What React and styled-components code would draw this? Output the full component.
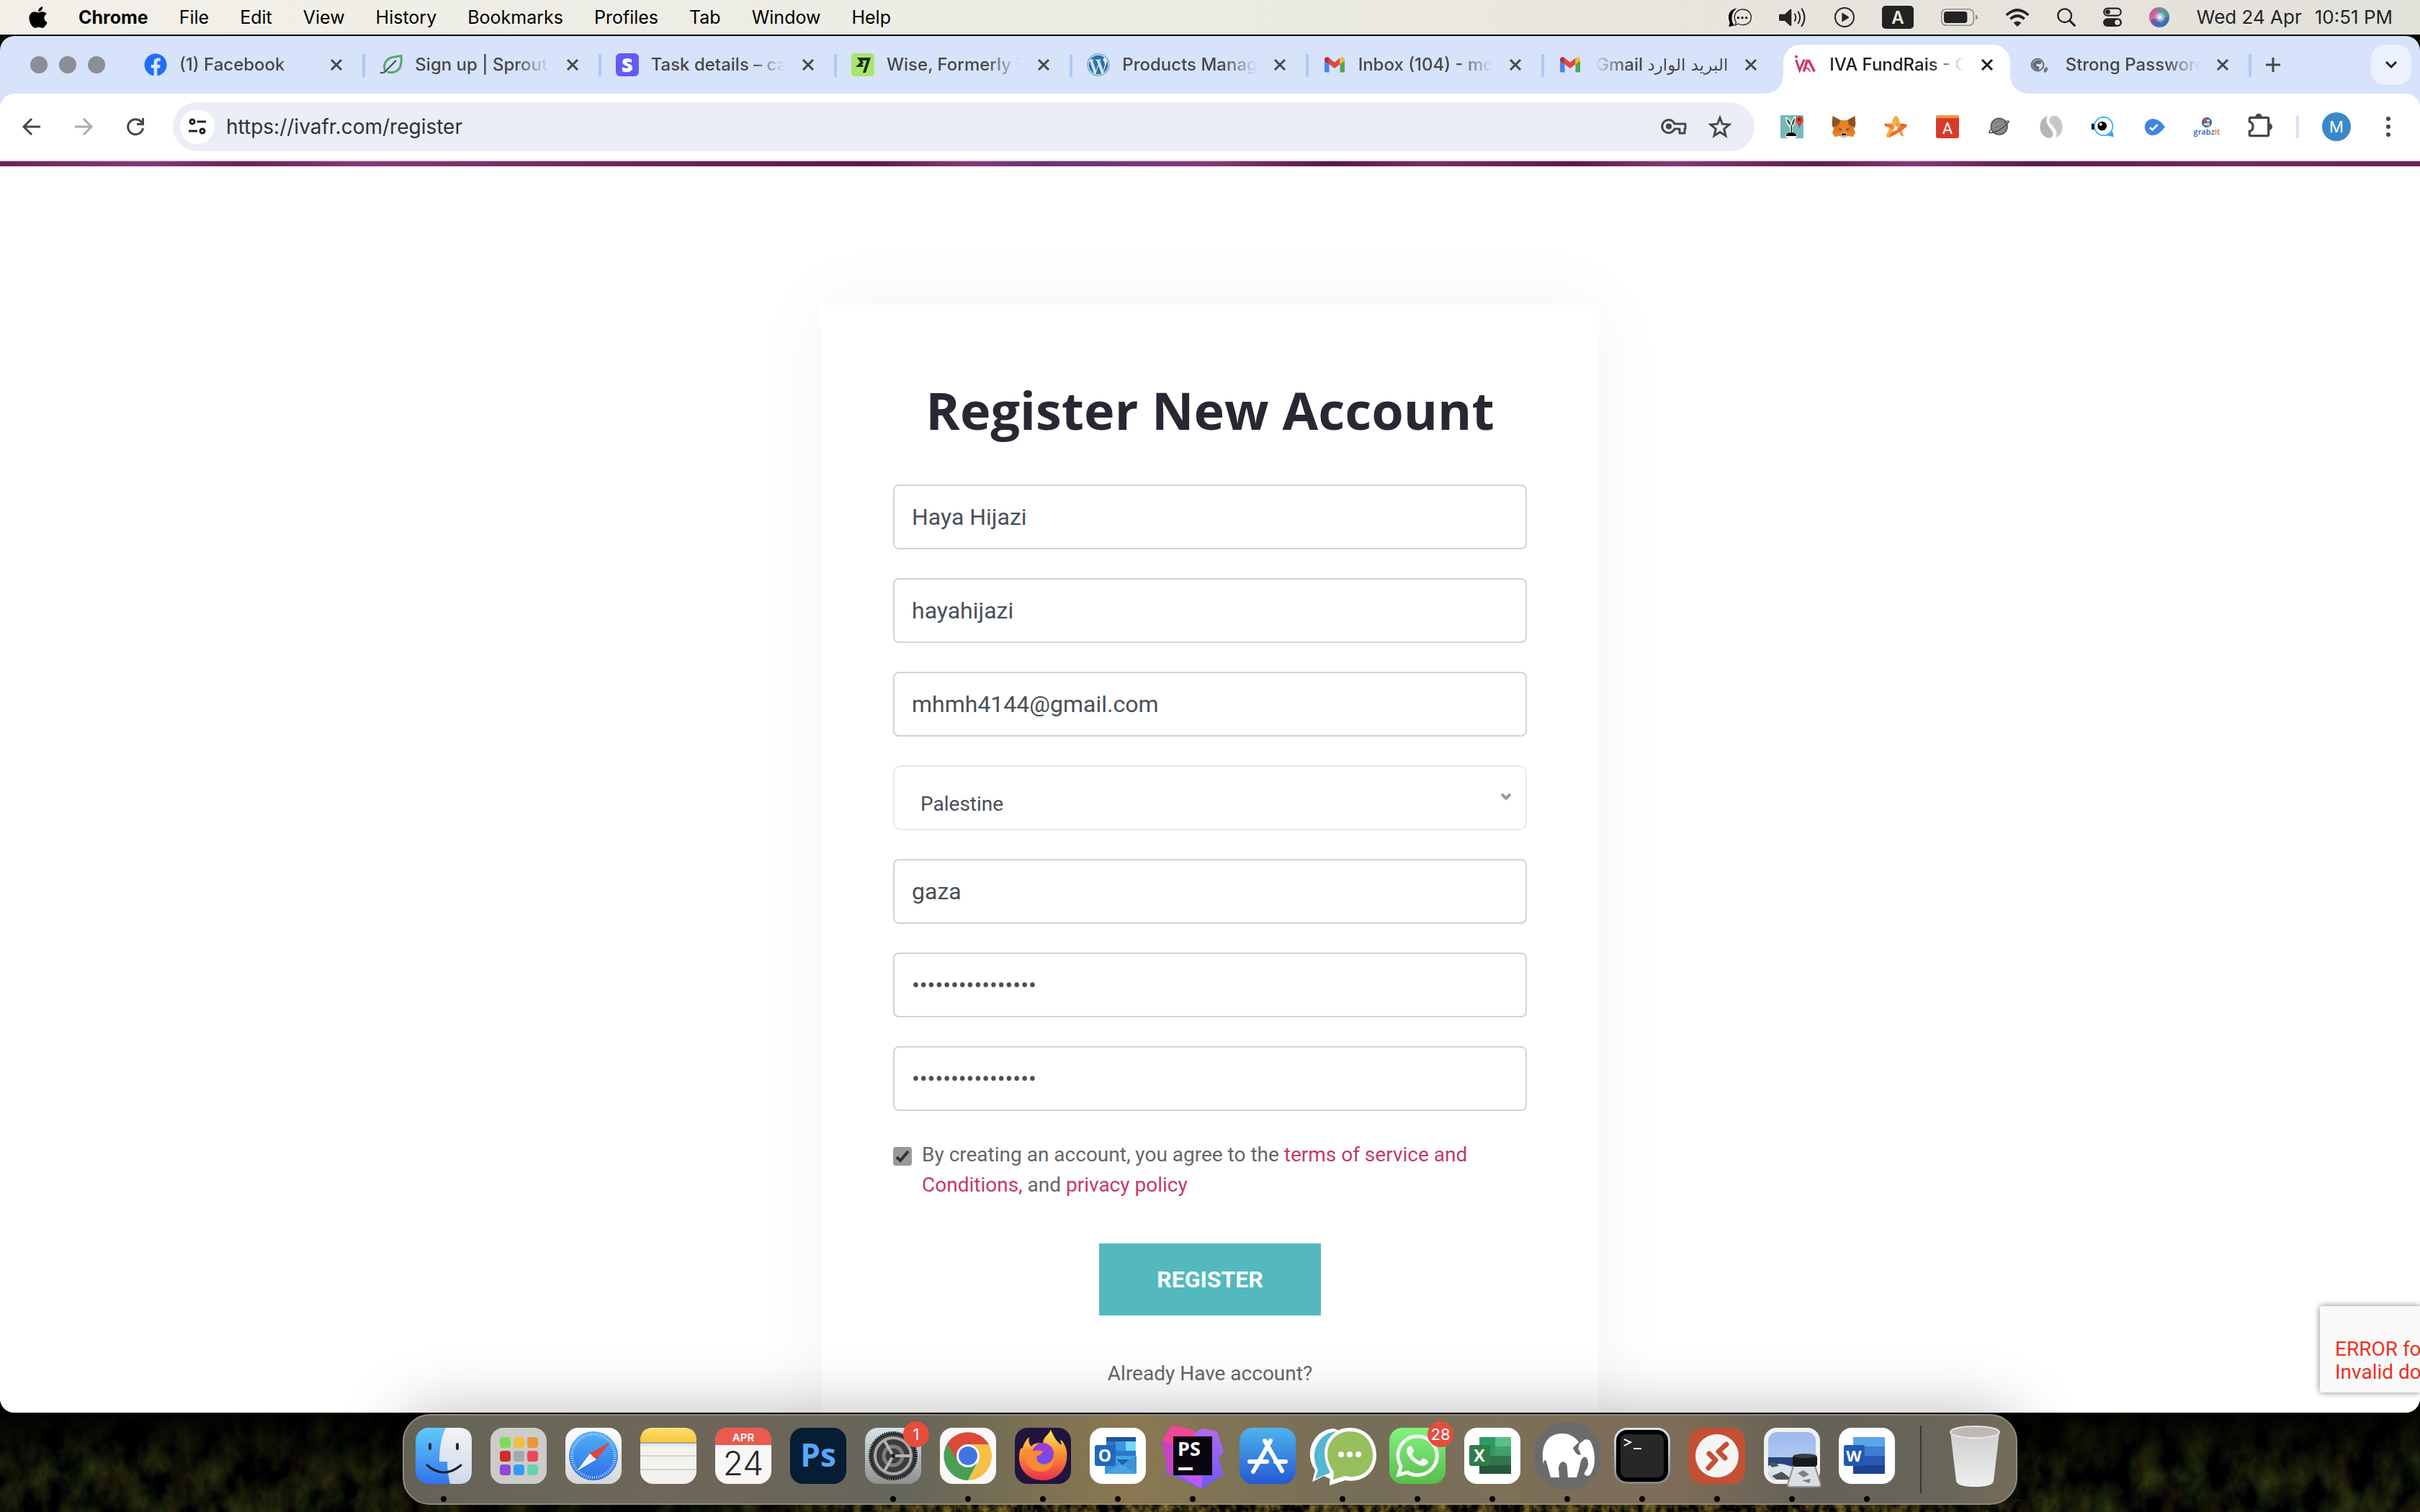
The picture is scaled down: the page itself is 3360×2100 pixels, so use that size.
import React, { useState } from "react";
import styled, { createGlobalStyle } from "styled-components";
import { FaApple, FaFacebook, FaWordpress, FaWhatsapp } from "react-icons/fa";

const GlobalStyle = createGlobalStyle`
  *, *::before, *::after {
    box-sizing: border-box;
  }

  body {
    margin: 0;
    background: #080a04;
    font-family: Inter, "Noto Sans", sans-serif;
  }

  button {
    font-family: inherit;
    border: none;
    padding: 0;
    background: none;
    color: inherit;
    cursor: pointer;
  }

  svg {
    display: block;
    flex: none;
  }
`;

const Desktop = styled.div`
  display: flex;
  flex-direction: column;
  height: 100vh;
  overflow: hidden;
  position: relative;
`;

const Wallpaper = styled.svg`
  position: absolute;
  left: 0;
  bottom: 0;
  width: 100%;
  height: 180px;
`;

/* ---------- macOS menu bar ---------- */

const MenuBar = styled.header`
  display: flex;
  align-items: center;
  justify-content: space-between;
  height: 48px;
  padding: 0 38px 0 40px;
  background: linear-gradient(90deg, #f2f0e8, #ebebe3 50%, #e9e5de 68%, #e2e1da);
  color: #000;
  flex: none;
`;

const MenuGroup = styled.nav`
  display: flex;
  align-items: center;
  gap: 43px;
`;

const AppleLogo = styled(FaApple)`
  width: 26px;
  height: 34px;
`;

const MenuItem = styled.button`
  font-size: 25px;
  line-height: 32px;
  font-weight: ${({ $bold }) => ($bold ? 700 : 400)};
`;

const StatusGroup = styled.div`
  display: flex;
  align-items: center;
  gap: 38px;
  color: #232323;
`;

const Clock = styled.div`
  display: flex;
  gap: 18px;
  font-size: 26px;
  line-height: 32px;
  white-space: nowrap;
`;

/* ---------- browser window ---------- */

const BrowserWindow = styled.div`
  display: flex;
  flex-direction: column;
  flex: 1;
  min-height: 0;
  margin-top: 2px;
  border-radius: 20px;
  background: #d7e2fb;
  box-shadow: 0 0 0 2px #000;
  overflow: hidden;
  position: relative;
`;

const TabStrip = styled.div`
  display: flex;
  align-items: center;
  height: 80px;
  flex: none;
`;

const WindowButtons = styled.div`
  display: flex;
  gap: 16px;
  width: 180px;
  padding-left: 42px;
  flex: none;
`;

const WindowDot = styled.button`
  width: 24px;
  height: 24px;
  border-radius: 50%;
  background: #8b8e97;
`;

const Tabs = styled.div`
  display: flex;
  flex: 1;
  min-width: 0;
  height: 100%;
`;

const TabBox = styled.div`
  display: flex;
  align-items: center;
  flex: 1 1 0;
  min-width: 0;
  padding: 0 20px;
  position: relative;
  isolation: isolate;
  color: ${({ $active }) => ($active ? "#1f1f1f" : "#474747")};
  border-right: 4px solid transparent;

  ${({ $active }) =>
    $active &&
    `
    &::before {
      content: "";
      position: absolute;
      z-index: -1;
      inset: 12px 4px 0 5px;
      border-radius: 24px 24px 0 0;
      background: #fff;
    }
    &::after {
      content: "";
      position: absolute;
      z-index: -1;
      height: 24px;
      inset: auto -20px 0 -19px;
      background:
        radial-gradient(circle at 0 0, transparent 23px, #fff 24px) left / 24px 24px no-repeat,
        radial-gradient(circle at 100% 0, transparent 23px, #fff 24px) right / 24px 24px no-repeat;
    }
  `}
`;

const TabTitle = styled.span`
  flex: 1;
  min-width: 0;
  margin: 0 16px 0 17px;
  font-size: 24px;
  line-height: 32px;
  font-weight: 500;
  white-space: nowrap;
  overflow: hidden;
  mask-image: linear-gradient(
    ${({ dir }) => (dir === "rtl" ? "270deg" : "90deg")},
    #000 calc(100% - 48px),
    transparent
  );
`;

const ArabicTitle = styled.span`
  font-family: "DejaVu Sans", sans-serif;
  font-size: 23px;
`;

const CloseButton = styled.button`
  display: grid;
  place-items: center;
  width: 32px;
  height: 32px;
`;

const Separator = styled.span`
  width: 4px;
  height: 32px;
  border-radius: 2px;
  background: ${({ $light }) => ($light ? "#d7e2fb" : "#aec8f8")};
  flex: none;
`;

const TabSeparator = styled(Separator)`
  position: absolute;
  right: -4px;
  top: 25px;
`;

const ToolbarDivider = styled(Separator)`
  margin: 0 16px;
`;

const StripActions = styled.div`
  display: flex;
  justify-content: space-between;
  align-items: center;
  width: 234px;
  padding: 0 12px 0 6px;
  flex: none;
`;

const StripButton = styled.button`
  display: grid;
  place-items: center;
  width: ${({ $filled }) => ($filled ? 56 : 48)}px;
  height: 56px;
  border-radius: 20px;
  background: ${({ $filled }) => ($filled ? "#ebf2fd" : "none")};
`;

const Toolbar = styled.div`
  display: flex;
  align-items: center;
  height: 94px;
  padding: 0 8px;
  border-radius: 20px 20px 0 0;
  border-bottom: 2px solid #e0e0e2;
  background: #fff;
  flex: none;
`;

const ToolButton = styled.button`
  display: grid;
  place-items: center;
  width: ${({ $narrow }) => ($narrow ? 64 : 72)}px;
  height: 64px;
  flex: none;
`;

const Omnibox = styled.div`
  display: flex;
  align-items: center;
  flex: 1;
  min-width: 0;
  height: 68px;
  margin: 0 16px;
  padding: 0 16px 0 10px;
  border-radius: 34px;
  background: #ebeef6;
`;

const SiteInfo = styled.button`
  display: grid;
  place-items: center;
  width: 48px;
  height: 48px;
  border-radius: 50%;
  background: #fff;
  flex: none;
`;

const UrlInput = styled.input`
  flex: 1;
  min-width: 0;
  padding: 0 16px;
  border: none;
  outline: none;
  background: none;
  color: #303133;
  font-family: inherit;
  font-size: 28px;
`;

const Avatar = styled.span`
  display: grid;
  place-items: center;
  width: 40px;
  height: 40px;
  border-radius: 50%;
  background: #3a88cb;
  color: #fff;
  font-size: 22px;
`;

/* ---------- web page ---------- */

const Page = styled.main`
  flex: 1;
  min-height: 0;
  overflow: hidden;
  background: #fff;
  font-family: Roboto, sans-serif;
`;

const HeroEdge = styled.div`
  height: 7px;
  margin-bottom: 192px;
  background: linear-gradient(
    90deg, #6b2260, #84397a 6%, #6c2160 10%, #84397a 15%, #702563 25%, #5d174f 36%, #84397a 40%,
    #6d3272 43%, #84397a 50%, #571748 55%, #7b2d68 59%, #5f174d 65%, #84397a 69%, #5d1c56 75%,
    #84397a 79%, #5a1a53 84%, #752863 92%, #6b2059
  );
`;

const Card = styled.form`
  display: flex;
  flex-direction: column;
  width: 1080px;
  max-width: 100%;
  margin: 0 auto;
  padding: 96px 100px 120px;
  background: #fff;
  box-shadow: 0 0 100px rgba(0, 0, 0, 0.05);
`;

const Title = styled.h1`
  margin: 0 0 54px;
  font-family: "Open Sans", sans-serif;
  font-size: 72px;
  font-weight: 700;
  line-height: 100px;
  text-align: center;
  color: #292733;
`;

const Fields = styled.div`
  display: flex;
  flex-direction: column;
  gap: 40px;
`;

const TextInput = styled.input`
  width: 100%;
  height: 90px;
  padding: 0 24px;
  border: 2px solid #ced4da;
  border-radius: 8px;
  background: #fff;
  color: #495057;
  font-family: inherit;
  font-size: 32px;
  outline: none;
`;

const SelectWrap = styled.div`
  position: relative;
`;

const Select = styled.select`
  display: block;
  width: 100%;
  height: 90px;
  padding: 16px 36px 0;
  border: 2px solid #e8e8e8;
  border-radius: 10px;
  appearance: none;
  background: #fff;
  color: #495057;
  font-family: inherit;
  font-size: 28px;
  outline: none;
`;

const SelectArrow = styled.svg`
  position: absolute;
  right: 22px;
  top: 37px;
  pointer-events: none;
`;

const Terms = styled.div`
  display: flex;
  gap: 14px;
  margin-top: 40px;
  color: #666;
  font-size: 28px;
  line-height: 42px;
`;

const CheckWrap = styled.span`
  display: grid;
  width: 26px;
  height: 26px;
  margin-top: 10px;
  flex: none;

  > * {
    grid-area: 1 / 1;
    pointer-events: none;
  }
`;

const Checkbox = styled.input`
  width: 26px;
  height: 26px;
  margin: 0;
  appearance: none;
  border-radius: 4px;
  background: #999;
  pointer-events: auto !important;
`;

const TermsLink = styled.a`
  color: #c23a6b;
  text-decoration: none;
`;

const RegisterButton = styled.button`
  align-self: center;
  width: 308px;
  height: 100px;
  margin-top: 60px;
  background: #53b9bf;
  color: #fff;
  font-size: 32px;
  font-weight: 700;
`;

const LoginHint = styled.p`
  margin: 60px 0 0;
  color: #666;
  font-size: 28px;
  line-height: 42px;
  text-align: center;
`;

const ErrorBadge = styled.div`
  position: absolute;
  right: 0;
  bottom: 28px;
  width: 139px;
  height: 120px;
  padding: 44px 0 0 21px;
  border-radius: 4px 0 0 4px;
  background: #f9f9f9;
  box-shadow: 0 0 10px #808080;
  color: #f03020;
  font-family: Roboto, sans-serif;
  font-size: 28px;
  line-height: 32px;
  white-space: nowrap;
  overflow: hidden;
`;

/* ---------- dock ---------- */

const DockArea = styled.footer`
  display: flex;
  justify-content: center;
  height: 138px;
  padding: 2px 0 10px;
  position: relative;
  flex: none;
`;

const DockBar = styled.div`
  display: flex;
  padding: 4px 5px 0 3px;
  border: 2px solid #8f8a7c;
  border-radius: 38px;
  background: linear-gradient(
    90deg, #646257, #6b6759 10%, #6f665a 18%, #65655a 31%, #7c7152 39%, #8b7852 45%, #7d7356 52%,
    #766d59 60%, #7c7058 68%, #7e6c58 79%, #646258 87%, #68655a 95%, #736c58
  );
  box-shadow: 0 0 90px rgba(0, 0, 0, 0.28);
`;

const DockItem = styled.button`
  display: flex;
  flex-direction: column;
  align-items: center;
  width: 104px;
  position: relative;
`;

const RunningDot = styled.span`
  width: 8px;
  height: 8px;
  margin-top: 4px;
  border-radius: 50%;
  background: #000;
`;

const DockBadge = styled.span`
  position: absolute;
  left: 66px;
  top: 4px;
  width: 36px;
  height: 36px;
  border-radius: 50%;
  background: #e74c3d;
  color: #fff;
  font-size: 22px;
  line-height: 36px;
  text-align: center;
`;

const DockDivider = styled.span`
  width: 2px;
  height: 94px;
  margin: 10px 22px 0;
  background: #3b372e;
`;

/* ---------- menu bar icons ---------- */

const MessagesStatus = () => (
  <svg width="33" height="28" viewBox="0 0 99 84">
    <path d="M38 5C8 6-5 36 8 62L4 82l24-6C8 55 15 18 38 5Z" fill="#000" />
    <path
      d="M62 9c20 0 35 13 35 33S82 74 62 74c-7 0-14-2-19-5l-12 6 3-14c-15-22-1-52 28-52Z"
      fill="none"
      stroke="#222"
      strokeWidth="4"
    />
    <circle cx="43" cy="44" r="5" />
    <circle cx="60" cy="44" r="5" />
    <circle cx="77" cy="44" r="5" />
  </svg>
);

const VolumeStatus = () => (
  <svg width="39" height="30" viewBox="0 0 117 90">
    <path d="M4 32h20L46 12q6-4 6 4v60q0 8-6 4L24 60H4q-4 0-4-6V38q0-6 4-6Z" fill="#232323" />
    <path
      d="M66 32q8 14 0 28M80 22q15 24 0 48M95 10q23 36 0 72"
      fill="none"
      stroke="#232323"
      strokeWidth="6"
      strokeLinecap="round"
    />
  </svg>
);

const PlayStatus = () => (
  <svg width="28" height="28" viewBox="0 0 84 84">
    <circle cx="42" cy="42" r="39" fill="none" stroke="#232323" strokeWidth="6" />
    <path d="M31 25v34q0 3 3 1l25-15q3-3 0-5L34 24q-3-2-3 1Z" fill="#232323" />
  </svg>
);

const KeyboardStatus = () => (
  <svg width="44" height="32" viewBox="0 0 44 32">
    <rect width="44" height="32" rx="5" fill="#232323" />
    <text x="22" y="25" textAnchor="middle" fontSize="24" fontWeight="600" fill="#ebebe3">
      A
    </text>
  </svg>
);

const BatteryStatus = () => (
  <svg width="51" height="24" viewBox="0 0 153 72">
    <rect x="2" y="2" width="134" height="68" rx="20" fill="none" stroke="#8f8f8a" strokeWidth="5" />
    <rect x="12" y="12" width="97" height="48" rx="11" fill="#232323" />
    <path d="M144 25q9 4 9 11t-9 11Z" fill="#8f8f8a" />
  </svg>
);

const WifiStatus = () => (
  <svg width="34" height="25" viewBox="0 0 102 75">
    <path d="M5 27q46-42 92 0M22 43q29-26 58 0" fill="none" stroke="#232323" strokeWidth="11" />
    <path d="M35 59q16-13 32 0L51 75Z" fill="#232323" />
  </svg>
);

const SearchStatus = () => (
  <svg width="26" height="26" viewBox="0 0 78 78">
    <circle cx="32" cy="32" r="28" fill="none" stroke="#232323" strokeWidth="7" />
    <path d="m53 53 20 20" stroke="#232323" strokeWidth="9" strokeLinecap="round" />
  </svg>
);

const ControlCenterStatus = () => (
  <svg width="26" height="28" viewBox="0 0 80 84">
    <rect x="4" y="4" width="72" height="31" rx="15.5" fill="none" stroke="#232323" strokeWidth="7" />
    <circle cx="20" cy="19" r="10" fill="#232323" />
    <rect y="46" width="80" height="36" rx="18" fill="#232323" />
    <circle cx="61" cy="64" r="11" fill="#e4e2db" />
  </svg>
);

const SiriStatus = () => (
  <svg width="28" height="28" viewBox="0 0 28 28">
    <defs>
      <linearGradient id="siriBase" x1="0" y1="0" x2="1" y2="1">
        <stop offset="0" stopColor="#b0478a" />
        <stop offset="0.35" stopColor="#d36aa8" />
        <stop offset="0.6" stopColor="#4a84c4" />
        <stop offset="1" stopColor="#2b4f9c" />
      </linearGradient>
      <radialGradient id="siriGlow">
        <stop offset="0" stopColor="#fff" />
        <stop offset="0.4" stopColor="#fff" stopOpacity="0.6" />
        <stop offset="1" stopColor="#fff" stopOpacity="0" />
      </radialGradient>
    </defs>
    <circle cx="14" cy="14" r="14" fill="url(#siriBase)" />
    <path d="M10 2q16-2 17 12-8 0-12-4T10 2Z" fill="#3da98c" opacity="0.85" />
    <path d="M2 17q10-2 14-1 0 8-5 10-8-2-9-9Z" fill="#5b3f9e" opacity="0.6" />
    <circle cx="15" cy="14" r="8" fill="url(#siriGlow)" />
  </svg>
);

/* ---------- tab icons ---------- */

const CloseIcon = () => (
  <svg width="18" height="18" viewBox="0 0 18 18" fill="none" stroke="currentColor" strokeWidth="3">
    <path d="m2 2 14 14M16 2 2 16" />
  </svg>
);

const LeafIcon = () => (
  <svg width="32" height="32" viewBox="0 0 32 32" fill="none">
    <path
      d="M9 26C4 19 7 8 18 5.500q6-1 12-2 1 8-1 14C27 25 19 28 11 26"
      stroke="#54a766"
      strokeWidth="3"
    />
    <path d="M1 27q6 1 9-4L23 10" stroke="#2c5436" strokeWidth="2" />
  </svg>
);

const SIcon = () => (
  <svg width="32" height="32" viewBox="0 0 32 32">
    <rect width="32" height="32" rx="6" fill="#635bf6" />
    <path
      d="M22 8.500q-4-1.700-7-1.500c-7 .3-7.500 8-1.500 10 4 1.500 4 1.800 3.800 2.800-.8 2-5.300.7-8.300-.8v6q6 2 10 .6c6-2.200 5-8.600.5-10.300-4-1.600-4.500-1.900-4-2.700.8-1.400 4-.6 6.500.4Z"
      fill="#fff"
    />
  </svg>
);

const WiseIcon = () => (
  <svg width="32" height="32" viewBox="0 0 32 32">
    <rect width="32" height="32" rx="5" fill="#a9e56f" />
    <path d="M8 6h19l-7 21h-4l5.500-17H15l2 3-3 3.500h3l-1 2.500H6l6.500-6.500Z" fill="#163300" />
  </svg>
);

const GmailIcon = () => (
  <svg width="32" height="32" viewBox="0 0 32 32">
    <path d="M2 10v14.500q0 2 2 2h4.500V14Z" fill="#4a86e8" />
    <path d="M30 10v14.500q0 2-2 2h-4.500V14Z" fill="#4fa758" />
    <path d="M8.500 6.500 16 12.500l7.500-6v8.800L16 21l-7.500-5.700Z" fill="#e0493c" />
    <path d="M2 9c0-4 4-4.500 6.500-2.500v8.800L2 10.500Z" fill="#bb2d25" />
    <path d="M30 9c0-4-4-4.500-6.500-2.500v8.800L30 10.500Z" fill="#f3bb38" />
  </svg>
);

const IvaIcon = () => (
  <svg width="32" height="32" viewBox="0 0 96 96" fill="none">
    <circle cx="9" cy="14" r="6" fill="#b83868" />
    <path d="m8 27 15 44 17-41h6" stroke="#c23a6c" strokeWidth="9" />
    <path d="M40 76 54 32h8l23 44" stroke="#cf3e72" strokeWidth="11" />
    <path d="M48 64q12-6 18 12" stroke="#cf3e72" strokeWidth="6" />
  </svg>
);

const GlobeIcon = () => (
  <svg width="32" height="32" viewBox="0 0 96 96">
    <circle cx="30" cy="48" r="25" fill="none" stroke="#676b73" strokeWidth="6" />
    <path d="M14 36q20-16 34 0l-6 10-14-2-5 8 15 5-4 14Q8 66 9 46Z" fill="#676b73" />
    <ellipse cx="64" cy="69" rx="7" ry="12" fill="#74777f" transform="rotate(25 64 69)" />
  </svg>
);

/* ---------- toolbar icons ---------- */

const ArrowIcon = ({ forward }) => (
  <svg
    width="28"
    height="28"
    viewBox="0 0 28 28"
    fill="none"
    stroke={forward ? "#ababab" : "#474747"}
    strokeWidth="3"
  >
    <path d={forward ? "M2 14h23M14 3l11 11-11 11" : "M26 14H3M14 3 3 14l11 11"} />
  </svg>
);

const ReloadIcon = () => (
  <svg width="28" height="28" viewBox="0 0 28 28" fill="none" stroke="#474747" strokeWidth="3">
    <path d="M23 8.500A10.500 10.500 0 1 0 24.500 16M24.500 2v8.500H16" />
  </svg>
);

const TuneIcon = () => (
  <svg width="26" height="24" viewBox="0 0 26 24" fill="none" stroke="#222" strokeWidth="3">
    <circle cx="6" cy="5" r="3" />
    <path d="M12.500 5H25M1 18h12" />
    <circle cx="20" cy="18" r="3" />
  </svg>
);

const KeyIcon = () => (
  <svg width="40" height="32" viewBox="0 0 40 32" fill="none" stroke="#474747" strokeWidth="3">
    <path d="M21 12h15v7h-1v6h-7v-6h-7a9 9 0 1 1 0-7Z" strokeLinejoin="round" />
    <circle cx="13" cy="15.500" r="2.500" fill="#474747" />
  </svg>
);

const StarIcon = () => (
  <svg width="32" height="32" viewBox="0 0 32 32" fill="none" stroke="#474747" strokeWidth="3">
    <path d="m16 3.500 3.400 8.700 9.600.8-7.300 6.200 2.300 9.300-8-5-8 5 2.300-9.300L3 13l9.600-.8Z" />
  </svg>
);

const PlantIcon = () => (
  <svg width="48" height="48" viewBox="0 0 144 144">
    <rect x="24" y="24" width="96" height="96" fill="#76b9bb" />
    <path d="M64 98V74Q44 60 46 32q20 6 23 24 2-18 18-28 4 32-13 46v24" fill="#fff" />
    <path d="M67 68Q50 56 50 38q17 8 17 30Zm5 0q-2-22 12-32 2 22-12 32Z" fill="#2d6144" />
    <path d="M70 66v32" stroke="#111" strokeWidth="4" />
    <ellipse cx="69" cy="108" rx="26" ry="13" fill="#fff" />
    <path d="M46 111q2-15 23-15t23 15Z" fill="#000" />
    <path d="M103 80q-2-12-10-22c-12-14-4-30 10-30s22 16 10 30q-8 10-10 22Z" fill="#d5443a" />
    <circle cx="103" cy="42" r="7" fill="#7c2620" />
  </svg>
);

const FoxIcon = () => (
  <svg width="48" height="48" viewBox="0 0 144 144">
    <path d="m26 28 34 17h24l34-17 3 32-7 20 6 18-11 17-20-5-8 6H63l-8-6-20 5-11-17 6-18-7-20Z" fill="#e8832a" />
    <path d="m26 28 32 18-8 19-24 10-3-15Zm92 0L86 46l8 19 24 10 3-15Z" fill="#8a5227" />
    <path d="m58 46-6 26 10 24-22-2-14 4 8-22 16-12 8-19Zm28 0 6 26-10 24 22-2 14 4-8-22-16-12-6-19Z" fill="#e0751c" />
    <path d="m48 79 14 2-2 6Zm48 0-14 2 2 6Z" fill="#303236" />
    <path d="m60 100 4-4h16l4 4v14H60Z" fill="#d6c4b4" />
    <path d="M64 100h16l2 8H62Z" fill="#1d1b1c" />
  </svg>
);

const RibbonStarIcon = () => (
  <svg width="48" height="48" viewBox="0 0 144 144">
    <path d="M24 59h76q18 0 20 8l-4 6H38q-8 0-14-14Z" fill="#e8552a" />
    <path d="M62 36q8-14 18-5 6 8 12 36l14 44q-12 4-17-10L70 46Z" fill="#f6a63d" />
    <path d="M62 36q8-8 14 6 0 12-8 32l-18 42q-14 6-18-8l22-46Z" fill="#f9b045" />
    <path d="M44 116q30-8 74-44l-4-8q-30 8-68 40Z" fill="#ee6f2e" />
    <path d="m30 60 10 13 18 12 5-12-9-14Z" fill="#ef7b34" />
    <path d="m80 84-7-22-12 30Z" fill="#fff" />
  </svg>
);

const LetterAIcon = () => (
  <svg width="48" height="48" viewBox="0 0 48 48">
    <rect x="8" y="8" width="32" height="32" rx="3" fill="#d63b2d" />
    <path d="M8 12v-1q0-3 3-3h26q3 0 3 3v1Z" fill="#e99a38" />
    <text x="24" y="34" textAnchor="middle" fontSize="22" fill="#fff" fontFamily="Roboto, sans-serif">
      A
    </text>
  </svg>
);

const PlanetIcon = () => (
  <svg width="48" height="48" viewBox="0 0 144 144" fill="none">
    <circle cx="71" cy="71" r="34" fill="#8b8b8b" stroke="#555" strokeWidth="5" />
    <path d="M48 62q26-16 38-14M50 78q26-6 44-22" stroke="#707070" strokeWidth="3" />
    <path d="M36 84q-12 14-2 14 26-2 60-28 24-22 14-22-6 0-14 6" stroke="#4d4d4d" strokeWidth="5" />
  </svg>
);

const SwirlIcon = () => (
  <svg width="48" height="48" viewBox="0 0 144 144">
    <path d="M57 27c-32 10-42 52-20 78 14 17 34 18 40 6 10-20-20-38-24-56-2-10-2-18 4-28Z" fill="#b5b5b5" />
    <path d="M66 36c10-16 34-10 44 6 18 30 8 66-20 76 14-26-8-44-20-58-6-8-8-16-4-24Z" fill="#c8c8c8" />
  </svg>
);

const EyeIcon = () => (
  <svg width="48" height="48" viewBox="0 0 144 144">
    <rect x="24" y="59" width="14" height="25" rx="3" fill="#000" />
    <circle cx="74" cy="70" r="38" fill="#fff" stroke="#38a7ea" strokeWidth="5" />
    <path d="M84 108q16-2 26-20l7 27Z" fill="#38a7ea" />
    <circle cx="68" cy="69" r="19" fill="#000" />
    <circle cx="62" cy="62" r="6" fill="#fff" />
  </svg>
);

const VerifiedIcon = () => (
  <svg width="48" height="48" viewBox="0 0 144 144">
    <path d="M114 73Q88 108 64 108a34 34 0 0 1 0-69q26 0 50 34Z" fill="#3f86e5" />
    <path d="m51 75 10 10 22-22" fill="none" stroke="#fff" strokeWidth="8" />
  </svg>
);

const GrabzIcon = () => (
  <svg width="48" height="48" viewBox="0 0 48 48">
    <circle cx="24" cy="18" r="7" fill="#2968ab" />
    <rect x="20" y="13" width="4" height="5" fill="#d85131" />
    <rect x="24" y="18" width="4" height="5" fill="#f0c64b" />
    <path d="M24 14h4v3h-4Zm-4 5h4v3h-4Z" fill="#cfdcec" />
    <text x="24" y="35" textAnchor="middle" fontSize="11" fontWeight="600" fill="#2d68ad" fontFamily="Open Sans, sans-serif">
      grabz<tspan fill="#e8663c">it</tspan>
    </text>
  </svg>
);

const PuzzleIcon = () => (
  <svg width="48" height="48" viewBox="0 0 144 144">
    <path
      d="M40 34h68q5 0 5 5v66q0 5-5 5H40q-6 0-6-5V91q14-4 14-20T34 51V39q0-5 6-5Z"
      fill="none"
      stroke="#474747"
      strokeWidth="10"
    />
    <path d="M58 31a14 14 0 0 1 28 0Zm56 26a15 15 0 0 1 0 30Z" fill="#474747" />
  </svg>
);

const MoreIcon = () => (
  <svg width="8" height="30" viewBox="0 0 8 30" fill="#474747">
    <circle cx="4" cy="4" r="3" />
    <circle cx="4" cy="15" r="3" />
    <circle cx="4" cy="26" r="3" />
  </svg>
);

/* ---------- dock icons, drawn on a 104 x 104 grid ---------- */

const Tile = ({ fill }) => <rect x="13" y="13" width="78" height="78" rx="18" fill={fill} />;

const Gradient = ({ id, stops }) => (
  <linearGradient id={id} x1="0" y1="0" x2="0" y2="1">
    {stops.map((color, i) => (
      <stop key={color} offset={i / (stops.length - 1)} stopColor={color} />
    ))}
  </linearGradient>
);

const finder = (
  <>
    <Gradient id="finderBlue" stops={["#5ecbfa", "#3373ee"]} />
    <Gradient id="finderGrey" stops={["#f1f2f5", "#d0dae8"]} />
    <Tile fill="url(#finderBlue)" />
    <path d="M55 13h18q18 0 18 18v42q0 18-18 18H61q-4-16-4-31H46q0-30 9-47Z" fill="url(#finderGrey)" />
    <path d="M33 36v6M71 36v6" stroke="#1d2a3c" strokeWidth="4" strokeLinecap="round" />
    <path d="M29 65q23 20 47 0" fill="none" stroke="#14202e" strokeWidth="3" strokeLinecap="round" />
  </>
);

const launchpadColors = [
  "#7bdc55", "#f5bf3e", "#eb9636", "#cd3026", "#a3a8ab", "#ee4858", "#9148d2", "#319cf6", "#69d0a8",
];

const launchpad = (
  <>
    <Tile fill="#ccccca" />
    {launchpadColors.map((color, i) => (
      <rect key={color} x={26 + (i % 3) * 19} y={26 + Math.floor(i / 3) * 19} width="15" height="15" rx="4" fill={color} />
    ))}
  </>
);

const safari = (
  <>
    <Gradient id="safariTile" stops={["#ffffff", "#d6d6d8"]} />
    <Gradient id="safariDial" stops={["#4fb0f4", "#2c6fe6"]} />
    <Tile fill="url(#safariTile)" />
    <circle cx="52" cy="52" r="34" fill="url(#safariDial)" />
    <circle cx="52" cy="52" r="30" fill="none" stroke="#b9dbf9" strokeWidth="4" strokeDasharray="1 2" />
    <path d="m76 32-29 17 9 8Z" fill="#e2443b" />
    <path d="M29 73 47 49l9 8Z" fill="#f2f2f2" />
  </>
);

const notes = (
  <>
    <Gradient id="notesTop" stops={["#fbdf6d", "#f8c63f"]} />
    <Tile fill="#f4f2ef" />
    <path d="M13 33V31q0-18 18-18h42q18 0 18 18v2Z" fill="url(#notesTop)" />
    <path d="M13 34h78" stroke="#a4a19c" strokeWidth="2" />
    <path d="M14 37h76" stroke="#c4c2be" strokeWidth="2" strokeDasharray="1 2" />
    <path d="M13 52h78M13 71h78" stroke="#d3d2d0" strokeWidth="2" />
  </>
);

const calendar = (
  <>
    <Tile fill="#f8f7f6" />
    <path d="M13 37v-6q0-18 18-18h42q18 0 18 18v6Z" fill="#ea5a4e" />
    <text x="52" y="32" textAnchor="middle" fontSize="15" fontWeight="600" fill="#fff">APR</text>
    <text x="52" y="79" textAnchor="middle" fontSize="46" fontWeight="300" fill="#2a2a2a">24</text>
  </>
);

const photoshop = (
  <>
    <Tile fill="#071d33" />
    <text x="52" y="67" textAnchor="middle" fontSize="44" fontWeight="700" fill="#55a8fb" fontFamily="Open Sans, sans-serif">
      Ps
    </text>
  </>
);

const settings = (
  <>
    <Gradient id="settingsTile" stops={["#d5e3e8", "#8f8f90"]} />
    <Tile fill="url(#settingsTile)" />
    <circle cx="52" cy="52" r="32" fill="#3c3c3c" />
    <circle cx="52" cy="52" r="32" fill="none" stroke="#1d1d1d" strokeWidth="4" strokeDasharray="2 1" />
    <circle cx="52" cy="52" r="25" fill="none" stroke="#a9a9a9" strokeWidth="4" />
    <circle cx="52" cy="52" r="13" fill="none" stroke="#7d7d7d" strokeWidth="5" />
    <path d="M52 52h24M52 52 40 31M52 52 40 73" stroke="#b5b5b5" strokeWidth="4" />
    <circle cx="52" cy="52" r="3" fill="#222" />
  </>
);

const chrome = (
  <>
    <Tile fill="#f8f8f8" />
    <path d="M52 52h-1L23 35a34 34 0 0 0 29 51l14-26Z" fill="#4a9f55" />
    <path d="M52 36h29a34 34 0 0 1-29 50l15-26Z" fill="#f4c045" />
    <path d="M23 35a34 34 0 0 1 58 1H52l-14 24Z" fill="#d94a3d" />
    <circle cx="52" cy="52" r="16" fill="#fff" />
    <circle cx="52" cy="52" r="13" fill="#3e77e4" />
  </>
);

const firefox = (
  <>
    <Gradient id="foxFlame" stops={["#fde84d", "#f98b35", "#e8304f"]} />
    <Gradient id="foxBall" stops={["#a33ad8", "#6a4fe8"]} />
    <Tile fill="#21143d" />
    <path
      d="M63 16c-4 8-13 12-10 19-10-2-15 1-17 4-4-4-4-9-3-13-5 4-8 10-9 15l-3 1c-8 24 8 44 31 44 22 0 36-18 33-40-1-8-5-14-9-17l2 8c-9-6-11-13-15-21Z"
      fill="url(#foxFlame)"
    />
    <circle cx="52" cy="49" r="15" fill="url(#foxBall)" />
    <path d="M25 43q8-2 13 2 7-1 14 0-2 6-8 7-3 10 10 12 8 0 14-8-2 18-20 18Q26 72 25 43Z" fill="#f98a38" />
  </>
);

const outlook = (
  <>
    <Tile fill="#fff" />
    <path d="M36 26h41v40H36Z" fill="#2a78c8" />
    <path d="M36 26h41v6H36Z" fill="#1f559c" />
    <path d="M63 32h14v13H63Z" fill="#74d6fb" />
    <path d="M49 32h14v13H49Z" fill="#3f96e0" />
    <path d="M34 52h44v23q0 2-2 2H36q-2 0-2-2Z" fill="#46a5e4" />
    <path d="M34 52v25l22-14 22 14V52L56 64Z" fill="#3b93d8" />
    <path d="m50 57 8 8 10-8Z" fill="#235fa8" />
    <rect x="20" y="37" width="29" height="29" rx="3" fill="#1f69bd" />
    <text x="34" y="60" textAnchor="middle" fontSize="23" fontWeight="700" fill="#fff" fontFamily="Open Sans, sans-serif">O</text>
  </>
);

const phpstorm = (
  <>
    <Gradient id="stormBlue" stops={["#b36bf0", "#6a5af6"]} />
    <path d="m54 20 12-6 20 4 9 28-7 10 7 22-31 20-29-14-20-8 1-48Z" fill="url(#stormBlue)" />
    <path d="m23 9 31 7 2 18-22 20-25-22Z" fill="#ee4896" />
    <path d="m9 30 20 8 2 40-13-2Z" fill="#c544c4" />
    <path d="m33 79 31 19 2-21Z" fill="#b95af5" />
    <rect x="25" y="25" width="54" height="54" fill="#0b050f" />
    <text x="31" y="52" fontSize="27" fontWeight="700" fill="#fff" fontFamily="Open Sans, sans-serif">PS</text>
    <path d="M32 70h20" stroke="#fff" strokeWidth="4" />
  </>
);

const appStore = (
  <>
    <Gradient id="storeTile" stops={["#4fb3ec", "#2458d4"]} />
    <Tile fill="url(#storeTile)" />
    <path
      d="m56 31-21 38M48 31l24 42M27 60h24M63 60h14M33 72l-1 2"
      stroke="#fff"
      strokeWidth="6"
      strokeLinecap="round"
    />
  </>
);

const chatBubbles = (
  <>
    <path d="M40 14C10 16-2 50 14 72l-4 16 16-8 18 8 10-68Z" fill="#fff" />
    <path d="M42 18C16 22 6 50 18 72l-4 12 20-8Z" fill="#53b6d2" />
    <path d="M62 13c24 0 37 18 37 38 0 24-19 39-43 35l-22 7 1-18C16 43 34 13 62 13Z" fill="#fff" />
    <path d="M62 18c21 0 32 16 32 33 0 22-18 34-39 29l-16 5 1-11C20 48 36 18 62 18Z" fill="#97bf5d" />
    <g fill="#fff">
      <circle cx="50" cy="50" r="4" />
      <circle cx="62" cy="50" r="4" />
      <circle cx="74" cy="50" r="4" />
    </g>
  </>
);

const whatsapp = (
  <>
    <Gradient id="waTile" stops={["#83f37f", "#58bd4b"]} />
    <Tile fill="url(#waTile)" />
    <FaWhatsapp x="18" y="18" size={68} color="#f4f4f4" />
  </>
);

const excel = (
  <>
    <Tile fill="#fff" />
    <path d="M34 26h44v51H34Z" fill="#2f9a63" />
    <path d="M56 26h22v13H56Z" fill="#5bc087" />
    <path d="M56 39h22v13H56Z" fill="#459f68" />
    <path d="M34 52h44v13H34Z" fill="#33744a" />
    <path d="M34 65h44v12H34Z" fill="#27573a" />
    <rect x="20" y="37" width="29" height="29" rx="3" fill="#2f7d47" />
    <text x="34" y="60" textAnchor="middle" fontSize="23" fontWeight="700" fill="#fff" fontFamily="Open Sans, sans-serif">X</text>
  </>
);

const elephant = (
  <>
    <circle cx="52" cy="52" r="47" fill="#6b6b6b" />
    <path
      d="M46 21c10 0 18 6 22 12l-8 8q4 10 10 10 2-2-3-9l2-7 8-6 6 1c9 14 8 34 4 42q-3 10-10 7-3-2 1-7c6-8 2-21-3-18-5 2-5 12-7 18l-3 10H53l-1-12c0-14-12-12-12 0l1 12H29L23 60Q20 54 19 64C14 36 26 20 46 21Z"
      fill="#fff"
    />
  </>
);

const terminal = (
  <>
    <Gradient id="terminalRim" stops={["#d5eaf2", "#84838a"]} />
    <Tile fill="url(#terminalRim)" />
    <rect x="16" y="16" width="72" height="72" rx="15" fill="#000" />
    <rect x="22" y="22" width="60" height="60" rx="8" fill="#272727" />
    <path d="m27 29 9 4-9 5M40 42h11" fill="none" stroke="#fff" strokeWidth="2" />
  </>
);

const remoteDesktop = (
  <>
    <Tile fill="#c45033" />
    <circle cx="52" cy="52" r="30" fill="#f5f5f5" />
    <path
      d="m41 49 9 9-10 11M65 36 54 46l9 9"
      fill="none"
      stroke="#c45033"
      strokeWidth="7"
      strokeLinejoin="round"
      strokeLinecap="round"
    />
  </>
);

const preview = (
  <>
    <Gradient id="previewSky" stops={["#9db9f0", "#bfd2ee"]} />
    <Tile fill="#f2f1ef" />
    <rect x="19" y="19" width="66" height="66" rx="12" fill="url(#previewSky)" />
    <path d="M19 54h66v17q0 14-14 14H31q-12 0-12-12Z" fill="#26457c" />
    <path d="M19 66q14-6 30 0l20 6v13H31q-12 0-12-12Z" fill="#d8e4ec" />
    <path d="M20 62q8-3 14 4l-10 2ZM24 80l14-6 12 9v2H31Z" fill="#4f5257" />
    <path d="M54 66h30l8 26q0 3-4 3H50q-4 0-4-3Z" fill="#dcdfe2" stroke="#8d9196" strokeWidth="2" />
    <path d="m60 76 8-4 8 6-8 4ZM66 86l12-2-2 6Z" fill="#77828f" />
    <rect x="53" y="51" width="34" height="16" rx="4" fill="#17181a" />
    <ellipse cx="70" cy="52" rx="16" ry="3" fill="#3c3d40" />
  </>
);

const word = (
  <>
    <Tile fill="#fff" />
    <path d="M33 26h44v13H33Z" fill="#5aa5e8" />
    <path d="M33 39h44v13H33Z" fill="#3f7dd0" />
    <path d="M33 52h44v13H33Z" fill="#2759b5" />
    <path d="M33 65h44v12H33Z" fill="#1e4290" />
    <rect x="20" y="37" width="29" height="29" rx="3" fill="#2258b4" />
    <text x="34" y="60" textAnchor="middle" fontSize="22" fontWeight="700" fill="#fff" fontFamily="Open Sans, sans-serif">W</text>
  </>
);

const trash = (
  <>
    <Gradient id="trashBody" stops={["#d0cfce", "#eeeeee"]} />
    <path d="M18 19 26 87q2 8 26 8t26-8l8-68Z" fill="url(#trashBody)" />
    <ellipse cx="52" cy="19" rx="34" ry="8" fill="#bcbab7" stroke="#e6e5e3" strokeWidth="2" />
  </>
);

const dockApps = [
  { name: "Finder", icon: finder, running: true },
  { name: "Launchpad", icon: launchpad },
  { name: "Safari", icon: safari },
  { name: "Notes", icon: notes },
  { name: "Calendar", icon: calendar },
  { name: "Photoshop", icon: photoshop },
  { name: "System Settings", icon: settings, running: true, badge: "1" },
  { name: "Google Chrome", icon: chrome, running: true },
  { name: "Firefox", icon: firefox, running: true },
  { name: "Outlook", icon: outlook, running: true },
  { name: "PhpStorm", icon: phpstorm, running: true },
  { name: "App Store", icon: appStore },
  { name: "Chat", icon: chatBubbles, running: true },
  { name: "WhatsApp", icon: whatsapp, running: true, badge: "28" },
  { name: "Excel", icon: excel, running: true },
  { name: "Postgres", icon: elephant, running: true },
  { name: "Terminal", icon: terminal, running: true },
  { name: "Remote Desktop", icon: remoteDesktop, running: true },
  { name: "Preview", icon: preview, running: true },
  { name: "Word", icon: word, running: true },
];

const menuItems = ["File", "Edit", "View", "History", "Bookmarks", "Profiles", "Tab", "Window", "Help"];

const tabs = [
  { icon: <FaFacebook size={32} color="#1f6ff2" />, title: "(1) Facebook", separator: true },
  { icon: <LeafIcon />, title: "Sign up | Sprout", separator: true },
  { icon: <SIcon />, title: "Task details – car", separator: true },
  { icon: <WiseIcon />, title: "Wise, Formerly Tr", separator: true },
  { icon: <FaWordpress size={32} color="#2b76a3" />, title: "Products Manage", separator: true },
  { icon: <GmailIcon />, title: "Inbox (104) - mo", separator: true },
  {
    icon: <GmailIcon />,
    title: (
      <>
        <ArabicTitle>البريد الوارد</ArabicTitle> Gmail
      </>
    ),
    dir: "rtl",
  },
  { icon: <IvaIcon />, title: "IVA FundRais - C", active: true },
  { icon: <GlobeIcon />, title: "Strong Password", separator: true },
];

const extensions = [
  { name: "Plant", icon: <PlantIcon /> },
  { name: "MetaMask", icon: <FoxIcon /> },
  { name: "Star", icon: <RibbonStarIcon /> },
  { name: "Letter", icon: <LetterAIcon /> },
  { name: "Planet", icon: <PlanetIcon /> },
  { name: "Swirl", icon: <SwirlIcon /> },
  { name: "Eye", icon: <EyeIcon /> },
  { name: "Verified", icon: <VerifiedIcon /> },
  { name: "GrabzIt", icon: <GrabzIcon /> },
  { name: "Extensions", icon: <PuzzleIcon /> },
];

function RegisterForm() {
  const [form, setForm] = useState({
    name: "Haya Hijazi",
    username: "hayahijazi",
    email: "mhmh4144@gmail.com",
    country: "Palestine",
    city: "gaza",
    password: "hayahijazi123456",
    confirm: "hayahijazi123456",
  });
  const [agreed, setAgreed] = useState(true);

  const handleChange = (e) => {
    setForm({ ...form, [e.target.name]: e.target.value });
  };

  return (
    <Card onSubmit={(e) => e.preventDefault()}>
      <Title>Register New Account</Title>
      <Fields>
        <TextInput name="name" aria-label="Full name" value={form.name} onChange={handleChange} />
        <TextInput name="username" aria-label="Username" value={form.username} onChange={handleChange} />
        <TextInput name="email" aria-label="Email" value={form.email} onChange={handleChange} />
        <SelectWrap>
          <Select name="country" aria-label="Country" value={form.country} onChange={handleChange}>
            <option>Palestine</option>
          </Select>
          <SelectArrow width="14" height="14" viewBox="0 0 14 14" fill="none" stroke="#999" strokeWidth="4">
            <path d="m1 3 6 6 6-6" />
          </SelectArrow>
        </SelectWrap>
        <TextInput name="city" aria-label="City" value={form.city} onChange={handleChange} />
        <TextInput type="password" name="password" aria-label="Password" value={form.password} onChange={handleChange} />
        <TextInput type="password" name="confirm" aria-label="Confirm password" value={form.confirm} onChange={handleChange} />
      </Fields>
      <Terms>
        <CheckWrap>
          <Checkbox id="agree" type="checkbox" checked={agreed} onChange={(e) => setAgreed(e.target.checked)} />
          {agreed && (
            <svg width="26" height="26" viewBox="0 0 26 26" fill="none" stroke="#333" strokeWidth="4">
              <path d="m5 14 5 5L21 6" />
            </svg>
          )}
        </CheckWrap>
        <label htmlFor="agree">
          By creating an account, you agree to the{" "}
          <TermsLink href="#terms">terms of service and Conditions,</TermsLink> and{" "}
          <TermsLink href="#privacy">privacy policy</TermsLink>
        </label>
      </Terms>
      <RegisterButton type="submit">REGISTER</RegisterButton>
      <LoginHint>Already Have account?</LoginHint>
    </Card>
  );
}

function Background() {
  return (
    <Wallpaper aria-hidden="true">
      <defs>
        <filter id="foliage" x="0" y="0" width="100%" height="100%" colorInterpolationFilters="sRGB">
          <feTurbulence type="fractalNoise" baseFrequency="0.03 0.02" numOctaves="5" seed="8" />
          <feColorMatrix values="0.36 0.1 0 0 -0.16  0.42 0 0 0 -0.13  0.1 0 0 0 -0.02  0 0 0 0 1" />
        </filter>
        <filter id="brush" x="0" y="0" width="100%" height="100%" colorInterpolationFilters="sRGB">
          <feTurbulence type="fractalNoise" baseFrequency="0.08 0.06" numOctaves="4" seed="3" />
          <feColorMatrix values="1.3 0 0 0 -0.4  1.1 0 0 0 -0.34  0.4 0 0 0 -0.12  0 0 0 0 1" />
        </filter>
        <linearGradient id="shade" x1="0" y1="0" x2="0" y2="1">
          <stop offset="0.2" stopColor="#000" stopOpacity="0.95" />
          <stop offset="0.7" stopColor="#000" stopOpacity="0.1" />
        </linearGradient>
        <linearGradient id="brushFade">
          <stop offset="0.3" stopColor="#000" />
          <stop offset="0.4" stopColor="#fff" />
          <stop offset="0.75" stopColor="#fff" />
          <stop offset="0.86" stopColor="#000" />
        </linearGradient>
        <mask id="brushMask">
          <rect width="100%" height="100%" fill="url(#brushFade)" />
        </mask>
      </defs>
      <rect width="100%" height="100%" filter="url(#foliage)" />
      <g mask="url(#brushMask)">
        <rect y="90%" width="100%" height="10%" filter="url(#brush)" />
      </g>
      <rect width="100%" height="100%" fill="url(#shade)" />
    </Wallpaper>
  );
}

function App() {
  return (
    <>
      <GlobalStyle />
      <Desktop>
        <Background />
        <MenuBar>
          <MenuGroup>
            <AppleLogo aria-label="Apple menu" />
            <MenuItem $bold>Chrome</MenuItem>
            {menuItems.map((item) => (
              <MenuItem key={item}>{item}</MenuItem>
            ))}
          </MenuGroup>
          <StatusGroup>
            <MessagesStatus />
            <VolumeStatus />
            <PlayStatus />
            <KeyboardStatus />
            <BatteryStatus />
            <WifiStatus />
            <SearchStatus />
            <ControlCenterStatus />
            <SiriStatus />
            <Clock>
              <span>Wed 24 Apr</span>
              <span>10:51 PM</span>
            </Clock>
          </StatusGroup>
        </MenuBar>

        <BrowserWindow>
          <TabStrip>
            <WindowButtons>
              <WindowDot aria-label="Close window" />
              <WindowDot aria-label="Minimise window" />
              <WindowDot aria-label="Zoom window" />
            </WindowButtons>
            <Tabs>
              {tabs.map((tab, i) => (
                <TabBox key={i} $active={tab.active}>
                  {tab.icon}
                  <TabTitle dir={tab.dir}>{tab.title}</TabTitle>
                  <CloseButton aria-label="Close tab">
                    <CloseIcon />
                  </CloseButton>
                  {tab.separator && <TabSeparator />}
                </TabBox>
              ))}
            </Tabs>
            <StripActions>
              <StripButton aria-label="New tab">
                <svg width="20" height="20" viewBox="0 0 20 20" stroke="#474747" strokeWidth="3">
                  <path d="M10 0v20M0 10h20" />
                </svg>
              </StripButton>
              <StripButton $filled aria-label="Search tabs">
                <svg width="18" height="12" viewBox="0 0 18 12" fill="none" stroke="#1f1f1f" strokeWidth="3">
                  <path d="m2 2 7 7 7-7" />
                </svg>
              </StripButton>
            </StripActions>
          </TabStrip>

          <Toolbar>
            <ToolButton aria-label="Back">
              <ArrowIcon />
            </ToolButton>
            <ToolButton aria-label="Forward">
              <ArrowIcon forward />
            </ToolButton>
            <ToolButton aria-label="Reload">
              <ReloadIcon />
            </ToolButton>
            <Omnibox>
              <SiteInfo aria-label="Site information">
                <TuneIcon />
              </SiteInfo>
              <UrlInput aria-label="Address" defaultValue="https://ivafr.com/register" />
              <ToolButton $narrow aria-label="Passwords">
                <KeyIcon />
              </ToolButton>
              <ToolButton $narrow aria-label="Bookmark">
                <StarIcon />
              </ToolButton>
            </Omnibox>
            {extensions.map((extension) => (
              <ToolButton key={extension.name} aria-label={extension.name}>
                {extension.icon}
              </ToolButton>
            ))}
            <ToolbarDivider $light />
            <ToolButton aria-label="Profile">
              <Avatar>M</Avatar>
            </ToolButton>
            <ToolButton aria-label="More">
              <MoreIcon />
            </ToolButton>
          </Toolbar>

          <Page>
            <HeroEdge />
            <RegisterForm />
          </Page>
          <ErrorBadge>
            ERROR for site
            <br />
            Invalid domain
          </ErrorBadge>
        </BrowserWindow>

        <DockArea>
          <DockBar>
            {dockApps.map((app) => (
              <DockItem key={app.name} aria-label={app.name}>
                <svg width="104" height="104" viewBox="0 0 104 104">
                  {app.icon}
                </svg>
                {app.running && <RunningDot />}
                {app.badge && <DockBadge>{app.badge}</DockBadge>}
              </DockItem>
            ))}
            <DockDivider />
            <DockItem aria-label="Trash">
              <svg width="104" height="104" viewBox="0 0 104 104">
                {trash}
              </svg>
            </DockItem>
          </DockBar>
        </DockArea>
      </Desktop>
    </>
  );
}

export default App;
